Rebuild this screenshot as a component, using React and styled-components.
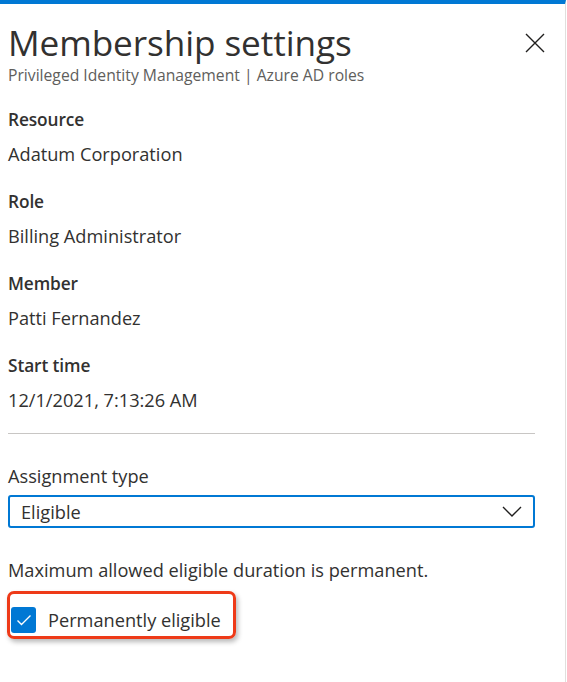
import React from 'react'
import styled, { createGlobalStyle } from 'styled-components'

const GlobalStyle = createGlobalStyle`
  html, body {
    margin: 0;
    padding: 0;
    background: #fff;
  }
  body {
    font-family: "Open Sans", "Noto Sans", sans-serif;
    color: #323130;
  }
`

const fields = [
  { label: 'Resource', value: 'Adatum Corporation' },
  { label: 'Role', value: 'Billing Administrator' },
  { label: 'Member', value: 'Patti Fernandez' },
  { label: 'Start time', value: '12/1/2021, 7:13:26 AM' },
]

function App() {
  return (
    <>
      <GlobalStyle />
      <Panel>
        <Header>
          <TitleBlock>
            <Title>Membership settings</Title>
            <Subtitle>Privileged Identity Management | Azure AD roles</Subtitle>
          </TitleBlock>
          <CloseButton aria-label="Close">
            <svg width="20" height="20" viewBox="0 0 20 20">
              <path d="M1 1 L19 19 M19 1 L1 19" stroke="#201f1e" strokeWidth="1.4" fill="none" />
            </svg>
          </CloseButton>
        </Header>

        <Content>
          {fields.map(f => (
            <Field key={f.label}>
              <Label>{f.label}</Label>
              <Value>{f.value}</Value>
            </Field>
          ))}

          <Divider />

          <FieldLabel>Assignment type</FieldLabel>
          <Dropdown>
            <span>Eligible</span>
            <svg width="20" height="11" viewBox="0 0 20 11">
              <path d="M1 1 L10 10 L19 1" stroke="#201f1e" strokeWidth="1.4" fill="none" />
            </svg>
          </Dropdown>

          <Note>Maximum allowed eligible duration is permanent.</Note>

          <Highlight>
            <CheckRow>
              <Checkbox checked>
                <svg width="16" height="12" viewBox="0 0 16 12">
                  <path d="M1.5 6.5 L5.5 10.5 L14.5 1.5" stroke="#fff" strokeWidth="1.4" fill="none" />
                </svg>
              </Checkbox>
              <CheckLabel>Permanently eligible</CheckLabel>
            </CheckRow>
          </Highlight>
        </Content>
      </Panel>
    </>
  )
}

export default App

const Panel = styled.div`
  width: 565px;
  height: 678px;
  border-top: 4px solid #0078d4;
  border-right: 1px solid #e1dfdd;
  background: #fff;
`

const Header = styled.div`
  display: flex;
  justify-content: space-between;
  align-items: flex-start;
  padding: 15px 0 0 8px;
`

const TitleBlock = styled.div`
  display: flex;
  flex-direction: column;
`

const Title = styled.h1`
  margin: 0;
  font-size: 35.2px;
  font-weight: 400;
  line-height: 46px;
  color: #323130;
  letter-spacing: -0.1px;
`

const Subtitle = styled.div`
  font-size: 15.7px;
  line-height: 20px;
  color: #605e5c;
`

const CloseButton = styled.button`
  border: none;
  background: transparent;
  padding: 0;
  margin: 14px 20px 0 0;
  width: 20px;
  height: 20px;
  cursor: pointer;
  display: flex;
`

const Content = styled.div`
  width: 527px;
  padding: 18px 0 0 8px;
`

const Field = styled.div`
  margin-bottom: 14px;
  &:last-of-type {
    margin-bottom: 0;
  }
`

const Label = styled.div`
  font-size: 17.3px;
  font-weight: 600;
  line-height: 34px;
  letter-spacing: -0.1px;
`

const Value = styled.div`
  font-size: 18.2px;
  line-height: 34px;
`

const Divider = styled.hr`
  border: none;
  border-top: 1px solid #c8c6c4;
  margin: 16px 0 0;
`

const FieldLabel = styled.div`
  margin-top: 30px;
  font-size: 18.2px;
  line-height: 24px;
`

const Dropdown = styled.div`
  margin-top: 7px;
  height: 29px;
  border: 2px solid #0078d4;
  border-radius: 3px;
  padding: 0 11px;
  display: flex;
  align-items: center;
  justify-content: space-between;
  font-size: 18.2px;
`

const Note = styled.div`
  margin-top: 30px;
  font-size: 18.2px;
  line-height: 24px;
`

const Highlight = styled.div`
  display: inline-flex;
  margin-top: 9px;
  margin-left: -1px;
  border: 3px solid #ee3a18;
  border-radius: 7px;
  padding: 13px 12px 3px 0;
  box-shadow: 2px 3px 5px rgba(0, 0, 0, 0.28);
`

const CheckRow = styled.label`
  display: flex;
  align-items: center;
  gap: 12px;
`

const Checkbox = styled.span`
  width: 25px;
  height: 26px;
  margin-left: 1px;
  border-radius: 3px;
  background: ${p => (p.checked ? '#0078d4' : '#fff')};
  border: ${p => (p.checked ? 'none' : '1px solid #323130')};
  display: flex;
  align-items: center;
  justify-content: center;
`

const CheckLabel = styled.span`
  font-size: 18.2px;
  line-height: 26px;
`
